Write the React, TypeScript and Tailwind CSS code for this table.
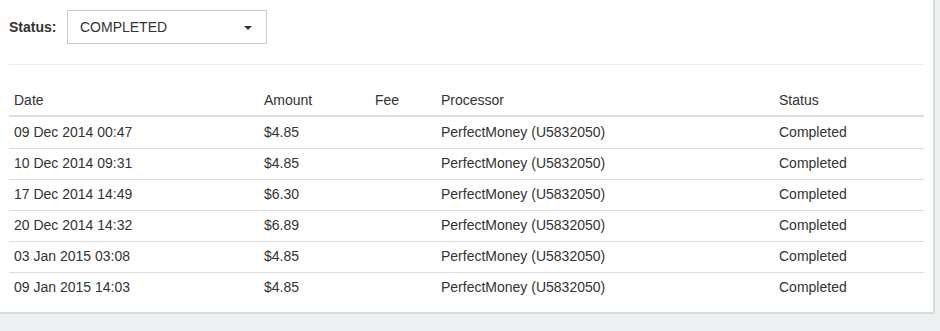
import React from 'react';

const rows = [
  { date: '09 Dec 2014 00:47', amount: '$4.85' },
  { date: '10 Dec 2014 09:31', amount: '$4.85' },
  { date: '17 Dec 2014 14:49', amount: '$6.30' },
  { date: '20 Dec 2014 14:32', amount: '$6.89' },
  { date: '03 Jan 2015 03:08', amount: '$4.85' },
  { date: '09 Jan 2015 14:03', amount: '$4.85' },
];

const App: React.FC = () => {
  return (
    <div
      className="min-h-[331px] bg-[#ecf0f1] text-[14px] text-[#333]"
      style={{ fontFamily: '"Liberation Sans", Arial, sans-serif' }}
    >
      <div className="w-[933px] h-[312px] bg-white shadow-[1px_1px_0_1px_#d9dcdd] px-[9px] pt-[10px]">
        {/* filter */}
        <div className="flex items-center h-[34px]">
          <label className="font-bold w-[58px]">Status:</label>
          <div className="relative w-[200px] h-[34px] border border-[#ccc] flex items-center pl-[12px]">
            <span>COMPLETED</span>
            <span className="absolute right-[14px] top-[15px] w-0 h-0 border-l-[4px] border-r-[4px] border-t-[4px] border-l-transparent border-r-transparent border-t-[#333]" />
          </div>
        </div>

        <div className="mt-[20px] border-t border-[#eee]" />

        <table className="mt-[21px] w-[915px] border-collapse table-fixed">
          <colgroup>
            <col className="w-[255px]" />
            <col className="w-[111px]" />
            <col className="w-[66px]" />
            <col className="w-[338px]" />
            <col className="w-[145px]" />
          </colgroup>
          <thead>
            <tr className="border-b-2 border-[#ddd]">
              <th className="text-left font-normal px-[5px] h-[30px] align-middle">Date</th>
              <th className="text-left font-normal px-0 align-middle">Amount</th>
              <th className="text-left font-normal px-0 align-middle">Fee</th>
              <th className="text-left font-normal px-0 align-middle">Processor</th>
              <th className="text-left font-normal px-0 align-middle">Status</th>
            </tr>
          </thead>
          <tbody>
            {rows.map((r, i) => (
              <tr key={i} className={i > 0 ? 'border-t border-[#ddd]' : ''}>
                <td className={`px-[5px] align-middle ${i === 0 ? 'h-[32px]' : 'h-[31px]'}`}>{r.date}</td>
                <td className="align-middle">{r.amount}</td>
                <td className="align-middle"></td>
                <td className="align-middle">PerfectMoney (U5832050)</td>
                <td className="align-middle">Completed</td>
              </tr>
            ))}
          </tbody>
        </table>
      </div>
    </div>
  );
};

export default App;
